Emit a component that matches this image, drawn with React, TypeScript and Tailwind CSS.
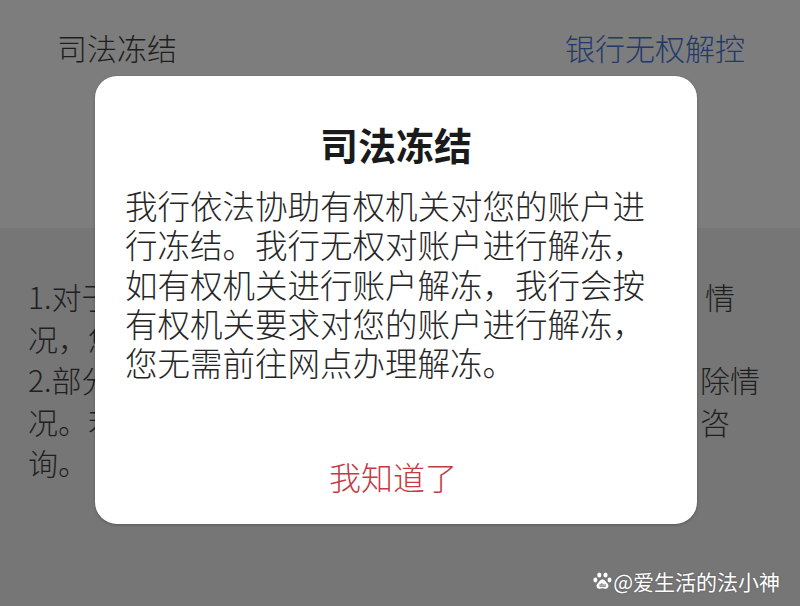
import React from "react";

const FONT = "font-['Noto_Sans_CJK_SC','Noto_Sans',sans-serif]";

function PawIcon() {
  return (
    <svg width="19" height="18" viewBox="0 0 19 18" className="shrink-0">
      <ellipse cx="6.3" cy="3" rx="2.1" ry="2.6" fill="#fff" />
      <ellipse cx="12.5" cy="3" rx="2.1" ry="2.6" fill="#fff" />
      <ellipse cx="2.4" cy="8" rx="2" ry="2.4" fill="#fff" />
      <ellipse cx="16.5" cy="8" rx="2" ry="2.4" fill="#fff" />
      <path d="M9.5 7.2c-2.2 0-3.2 2.6-5 4.4-1.6 1.6-1.2 5 1.6 5.2 1.4.1 2.3-.6 3.4-.6s2 .7 3.4.6c2.8-.2 3.2-3.6 1.6-5.2-1.8-1.8-2.8-4.4-5-4.4z" fill="#fff" />
      <text x="9.5" y="15" textAnchor="middle" fontSize="5.5" fontWeight="700" fill="#777" fontFamily="Liberation Sans, sans-serif">du</text>
    </svg>
  );
}

// Only the ends of each line show beside the dialog
const BG_LINES: { left: string; right?: string; pr: string }[] = [
  { left: "1.对于", right: "情", pr: "pr-[65px]" },
  { left: "况，您", pr: "pr-[40px]" },
  { left: "2.部分", right: "除情", pr: "pr-[40px]" },
  { left: "况。若", right: "咨", pr: "pr-[70px]" },
  { left: "询。", pr: "pr-[40px]" },
];

const BODY_LINES = [
  "我行依法协助有权机关对您的账户进",
  "行冻结。我行无权对账户进行解冻，",
  "如有权机关进行账户解冻，我行会按",
  "有权机关要求对您的账户进行解冻，",
  "您无需前往网点办理解冻。",
];

export default function App() {
  return (
    <div className={`relative w-[800px] h-[606px] overflow-hidden bg-[#767676] ${FONT}`}>
      {/* underlying page, dimmed */}
      <div className="h-[228px] bg-[#7d7d7d] pt-[27px] pl-[57px] pr-[55px] flex justify-between text-[30px] leading-[40px] font-light">
        <span className="text-[#1e1e1e]">司法冻结</span>
        <span className="text-[#22396a]">银行无权解控</span>
      </div>
      <div className="pt-[48px] pl-[28px] text-[30px] leading-[41.5px] text-[#1f1f1f] font-light">
        {BG_LINES.map((l, i) => (
          <div key={i} className={`flex justify-between whitespace-nowrap ${l.pr}`}>
            <span>{l.left}</span>
            {l.right && <span>{l.right}</span>}
          </div>
        ))}
      </div>

      {/* dialog */}
      <div className="absolute left-[95px] top-[76px] w-[602px] h-[448px] rounded-[22px] bg-white flex flex-col shadow-[0_1px_3px_rgba(0,0,0,0.25)]">
        <h2 className="pt-[43px] text-center text-[38px] leading-[50px] font-bold text-[#1a1a1a]">
          司法冻结
        </h2>
        <div className="mt-[16px] pl-[30px] text-[32.5px] leading-[39.3px] text-[#262626] font-light">
          {BODY_LINES.map((t, i) => (
            <div key={i} className="whitespace-nowrap">{t}</div>
          ))}
        </div>
        <div className="mt-auto mb-[28px] h-[40px] flex items-center justify-center">
          <button className="text-[32px] leading-[40px] text-[#c43a44] font-light -ml-[6px]">我知道了</button>
        </div>
      </div>

      {/* watermark */}
      <div className="absolute right-[20px] top-[568px] flex items-center gap-[1px] text-white text-[21px] leading-[26px] [text-shadow:0_0_2px_rgba(0,0,0,0.3)]">
        <PawIcon />
        <span>@爱生活的法小神</span>
      </div>
    </div>
  );
}
